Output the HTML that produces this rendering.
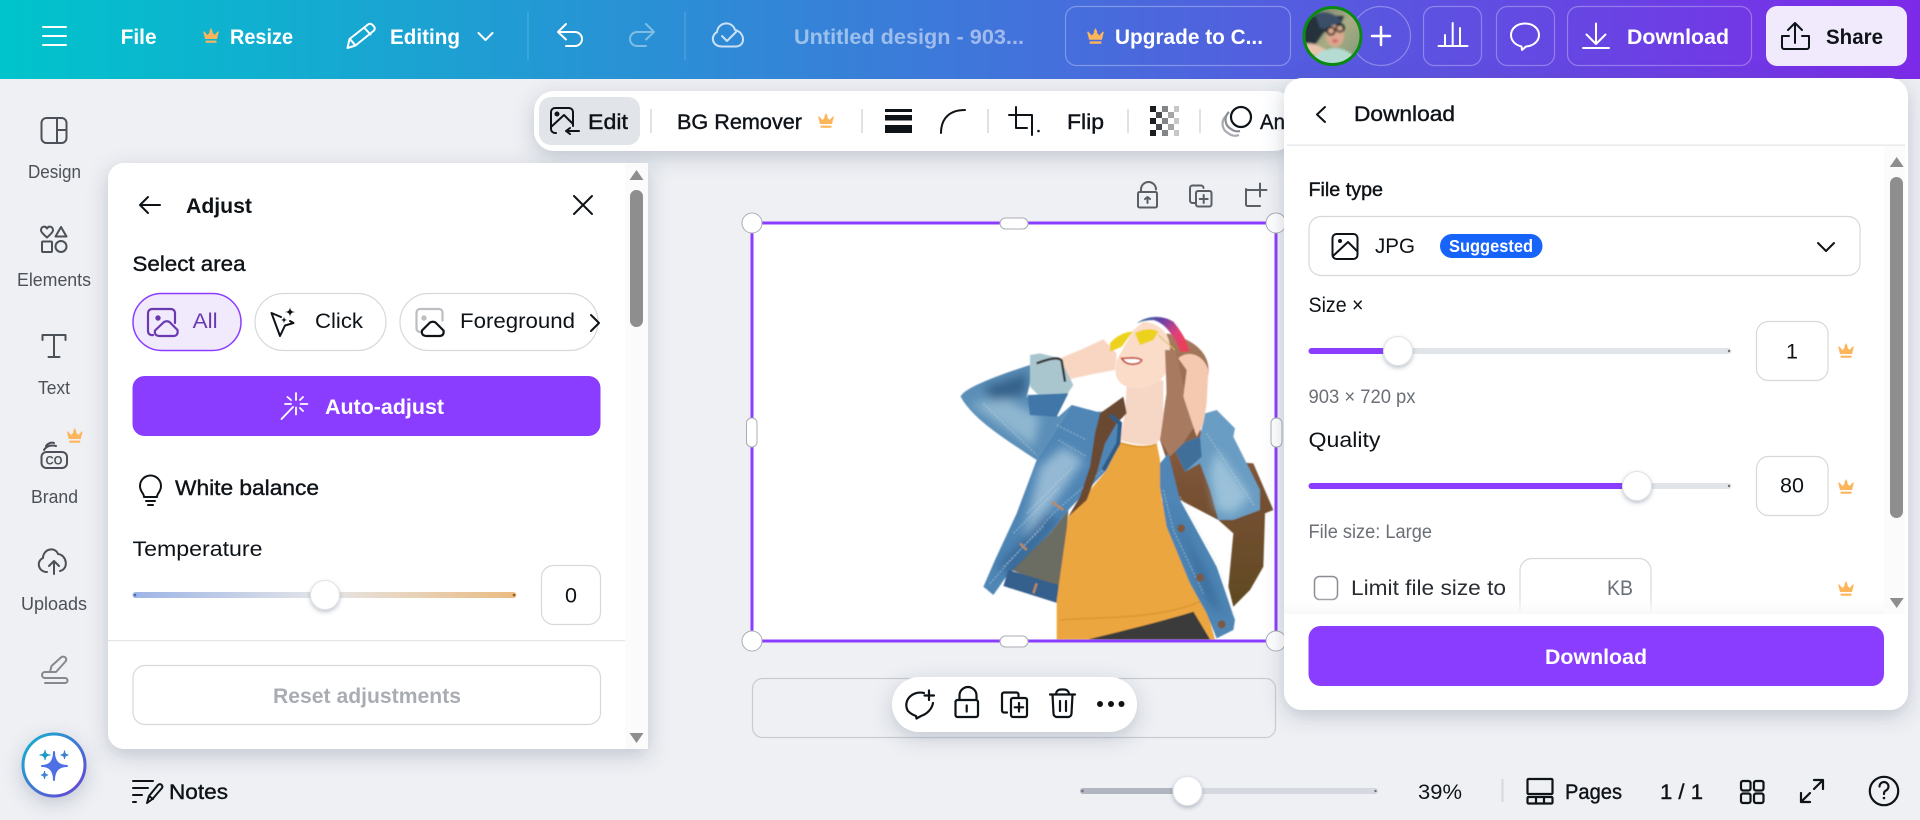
<!DOCTYPE html>
<html lang="en">
<head>
<meta charset="utf-8">
<title>Canva editor</title>
<style>
html,body{margin:0;padding:0;width:1920px;height:820px;overflow:hidden;background:#eff0f4}
svg{display:block;position:absolute;left:0;top:0}
text{font-family:"Liberation Sans",sans-serif;font-size:21.5px;fill:#0e1318}
.b{font-weight:bold}
.m{stroke:#0e1318;stroke-width:.4px}
.w{fill:#fff;font-weight:bold}
.s{font-size:18px;fill:#4c5058}
.g{fill:#6b6f76}
.i{fill:none;stroke:#0e1318;stroke-width:2;stroke-linecap:round;stroke-linejoin:round}
.iw{fill:none;stroke:#fff;stroke-width:2;stroke-linecap:round;stroke-linejoin:round}
.is{fill:none;stroke:#4c5058;stroke-width:2;stroke-linecap:round;stroke-linejoin:round}
.box{fill:#fff;stroke:#d6d8dd;stroke-width:1.2}
.hb{fill:none;stroke:rgba(255,255,255,.3);stroke-width:1.2}
.hnd{fill:#fff;stroke:#a9adb5;stroke-width:1}
</style>
</head>
<body>
<svg width="1920" height="820" viewBox="0 0 1920 820" xmlns="http://www.w3.org/2000/svg">
<defs>
<linearGradient id="hdr" x1="0" x2="1" y1="0" y2="0"><stop offset="0" stop-color="#00c4cc"/><stop offset="1" stop-color="#7d2ae8"/></linearGradient>
<linearGradient id="temp" x1="0" x2="1" y1="0" y2="0"><stop offset="0" stop-color="#9db4e6"/><stop offset=".5" stop-color="#e6e6e8"/><stop offset="1" stop-color="#eabb80"/></linearGradient>
<linearGradient id="ring" x1="0" x2="1" y1="0" y2="1"><stop offset="0" stop-color="#12b5cb"/><stop offset="1" stop-color="#6a3fd8"/></linearGradient>
<linearGradient id="band" x1="0" x2="1" y1="0" y2=".6"><stop offset="0" stop-color="#2f7f9c"/><stop offset=".4" stop-color="#6a3fa8"/><stop offset=".75" stop-color="#e0407a"/><stop offset="1" stop-color="#e8405a"/></linearGradient>
<linearGradient id="hair" x1="0" x2="0" y1="0" y2="1"><stop offset="0" stop-color="#a87b5f"/><stop offset=".55" stop-color="#7a5236"/><stop offset="1" stop-color="#5f4a22"/></linearGradient>
<linearGradient id="fade" x1="0" x2="0" y1="0" y2="1"><stop offset="0" stop-color="#fff" stop-opacity="0"/><stop offset="1" stop-color="#f8f8f9"/></linearGradient>
<linearGradient id="av" x1="0" x2="1" y1="0" y2="1"><stop offset="0" stop-color="#6a7a6a"/><stop offset=".5" stop-color="#a9ac84"/><stop offset="1" stop-color="#7d9a78"/></linearGradient>
<filter id="sh" x="-20%" y="-20%" width="140%" height="140%"><feDropShadow dx="0" dy="6" stdDeviation="10" flood-color="#40576d" flood-opacity=".28"/></filter>
<filter id="shb" x="-20%" y="-80%" width="140%" height="300%"><feDropShadow dx="0" dy="6" stdDeviation="10" flood-color="#40576d" flood-opacity=".26"/></filter>
<filter id="shc" x="-80%" y="-80%" width="260%" height="280%"><feDropShadow dx="0" dy="6" stdDeviation="9" flood-color="#40576d" flood-opacity=".25"/></filter>
<filter id="sh2" x="-60%" y="-60%" width="220%" height="240%"><feDropShadow dx="0" dy="2" stdDeviation="2" flood-color="#40576d" flood-opacity=".35"/></filter>
<filter id="soft" x="-5%" y="-5%" width="110%" height="110%"><feGaussianBlur stdDeviation="1.6"/></filter>
<filter id="soft2" x="-10%" y="-10%" width="120%" height="120%"><feGaussianBlur stdDeviation="1"/></filter>
<filter id="patch" x="-30%" y="-30%" width="160%" height="160%"><feGaussianBlur stdDeviation="14"/></filter>
<symbol id="crown" viewBox="0 0 16 15"><path fill="#fdb55c" d="M8 0l1.5 3 0 1.6L11.5 7 15 3.2l.8.6L14 11H2L.2 3.8l.8-.6L4.5 7l2-2.4V3Z"/><rect x="2.5" y="12.6" width="11" height="2.2" rx=".6" fill="#fdb55c"/></symbol>
<clipPath id="cvs"><rect x="753" y="224" width="522" height="416"/></clipPath>
<clipPath id="avc"><circle cx="1332.5" cy="36" r="28"/></clipPath>
<clipPath id="dlc"><rect x="1284" y="146" width="624" height="468"/></clipPath>
<clipPath id="jkt"><path d="M62 290C70 270 130 240 270 195L275 230 260 290 355 350 395 315 470 335 520 335 545 370 540 430 500 510 385 630 330 700 195 835 160 885 130 860 165 780 230 640 290 480C200 420 100 360 62 290ZM660 490L700 440 780 410 795 340 830 330 885 385 880 410 960 570 960 630 880 660 835 660 885 960 880 990 830 1015 800 940 750 850 680 680 660 560Z"/></clipPath>
</defs>

<rect width="1920" height="820" fill="#eff0f4"/>

<!-- Canvas -->
<rect x="752" y="223" width="524" height="418" fill="#fff"/>
<g clip-path="url(#cvs)">
<g transform="translate(940 300) scale(.33333)" filter="url(#soft)">
<path fill="url(#hair)" d="M680 100C760 115 812 160 805 220L770 330 800 480 940 490 1000 630 975 640 970 800 930 870 880 920 865 860 880 700 835 660 720 600 660 420 680 280Z"/>
<path fill="#5b8fb8" d="M62 290C70 270 130 240 270 195L275 230 260 290 355 350 395 315 290 480C200 420 100 360 62 290Z"/>
<path fill="#4f86b5" d="M395 315L470 335 520 335 545 370 540 430 500 510 385 630 330 700 195 835 160 885 130 860 165 780 230 640 290 480Z"/>
<path fill="#6c6d62" d="M385 630L380 700 355 870 215 810 330 700Z"/>
<path fill="#355f8d" d="M205 810L355 855 355 910 190 858Z"/>
<path fill="#eba63f" d="M540 425C590 440 620 440 650 430L660 480 665 600 760 800 800 930 825 1018 350 1018 350 900 385 650 500 510Z"/>
<path fill="none" stroke="#d48f2e" stroke-width="4" opacity=".7" d="M360 960C480 950 650 960 780 905M545 430C590 445 620 445 650 432"/>
<path fill="#3a3b3a" d="M445 1018C560 990 680 960 760 935L810 1018Z"/>
<path fill="#4f86b5" d="M660 490L685 460 720 600 830 800 885 960 880 990 830 1015 800 940 750 850 680 680 660 560Z"/>
<path fill="#6a9dc3" d="M700 440L780 410 795 340 830 330 885 385 880 410 960 570 960 630 880 660 835 660 810 570 780 490 735 515Z"/>
<g clip-path="url(#jkt)">
<g filter="url(#patch)">
<path fill="#35628a" d="M130 262L262 218 255 285 160 300Z"/>
<path fill="#9cc0d6" opacity=".8" d="M90 310L200 300 300 350 280 440Z"/>
<path fill="#a6c6dc" opacity=".8" d="M300 500L370 440 430 480 340 610 250 710Z"/>
<path fill="#a8cade" opacity=".8" d="M830 450L930 590 880 640 830 630 810 520Z"/>
<path fill="#2f5f90" opacity=".7" d="M170 800L320 640 360 660 220 830Z"/>
<path fill="#2f5f90" opacity=".7" d="M690 620L800 820 850 950 800 900Z"/>
</g>
<path fill="none" stroke="#cfe0ea" stroke-width="3" opacity=".55" stroke-dasharray="6 5" d="M350 375L440 420M355 420L440 470M670 570L700 690 790 880M720 590L840 800 880 950M150 850L340 640 500 500M130 310L290 465M800 400L945 620M220 700L360 560M260 640L400 500M190 800L310 680"/>
</g>
<path fill="#3f6f99" d="M700 440L780 410 785 470 735 515Z"/>
<path fill="#f6d6c4" d="M560 260L670 240 670 400 650 430C610 440 570 430 540 420L555 340Z"/>
<path fill="#fbdcc9" d="M530 180C520 230 530 260 590 265 650 265 690 230 690 160 695 100 660 70 610 65L580 90Z"/>
<path fill="#a87a5e" d="M675 150L705 150 740 290 770 370 730 430 690 470 660 420 680 280Z"/>
<path fill="#f4c9b0" d="M715 175C740 150 790 160 805 210L800 310 790 370 770 410 760 380 730 290 740 210Z"/>
<path fill="#f8d6c2" d="M285 195L360 175 420 150 490 118 530 160 525 210 470 220 400 235 375 245Z"/>
<path fill="#a9c6cf" d="M270 165L300 160 360 175 400 255 380 285 300 290 270 260Z"/>
<path fill="#3f76a8" d="M262 285L385 280 350 350 270 345Z"/>
<path fill="none" stroke="#333" stroke-width="7" d="M290 190C330 175 355 170 365 182L375 245"/>
<path fill="#6b4a33" d="M550 290L560 340 530 370 495 430 470 520 440 600 385 650 420 590 450 500 465 400 480 340Z"/>
<path fill="none" stroke="#2d5b86" stroke-width="12" d="M510 345L540 370 535 430 490 510"/>
<path fill="none" stroke="#c08a5c" stroke-width="7" d="M335 605L370 630M240 730L260 750M290 850L280 880"/>
<circle cx="723" cy="685" r="12" fill="#7a5a44"/><circle cx="780" cy="833" r="12" fill="#7a5a44"/><circle cx="845" cy="973" r="12" fill="#7a5a44"/>
<path fill="#ecd21c" d="M510 130C530 105 560 95 578 95L545 140 510 155Z"/>
<path fill="#ecd21c" d="M585 100C610 85 640 85 655 95L640 120 600 135Z"/>
<path fill="none" stroke="#d9c25a" stroke-width="3" d="M655 105L705 150"/>
<path fill="#fff" stroke="#c14a3d" stroke-width="5" d="M545 175C565 175 590 170 605 180 600 195 560 200 545 175Z"/>
<path fill="url(#band)" d="M590 70C620 45 670 45 700 65 725 95 745 130 748 155L722 155C705 115 680 70 640 60 620 60 600 65 590 70Z"/>
</g>
</g>

<!-- Selection -->
<rect x="752" y="223" width="524" height="418" fill="none" stroke="#8b3dff" stroke-width="3"/>
<rect x="1000" y="218" width="28" height="11" rx="5.5" class="hnd"/>
<rect x="1000" y="636" width="28" height="11" rx="5.5" class="hnd"/>
<rect x="746.5" y="418" width="10.5" height="29" rx="5" class="hnd"/>
<rect x="1271" y="418" width="11" height="29" rx="5" class="hnd"/>
<circle cx="752" cy="223" r="10" class="hnd"/><circle cx="1276" cy="223" r="10" class="hnd"/>
<circle cx="752" cy="641" r="10" class="hnd"/><circle cx="1276" cy="641" r="10" class="hnd"/>

<!-- Canvas top icons -->
<g class="is" style="stroke:#5a5e65">
<path d="M1141 192v-2.500a7.500 7.500 0 0 1 15 0"/><rect x="1138" y="192" width="19" height="15.500" rx="1.500"/><path d="M1147.500 198v5M1145 199l2.500-2 2.500 2"/>
<path d="M1195 203h-2.500a2.500 2.500 0 0 1-2.500-2.500V188a2.500 2.500 0 0 1 2.500-2.500h8.500a2.500 2.500 0 0 1 2.500 2.500"/><rect x="1196" y="191" width="15.500" height="15.500" rx="2"/><path d="M1203.700 195v8M1199.700 199h8"/>
<path d="M1246 189v15.500a1.500 1.500 0 0 0 1.500 1.500h12.500M1253 190h-7M1260 183.500v13M1253.500 190h13"/>
</g>

<!-- Add page -->
<rect x="752.500" y="678.500" width="523" height="59" rx="10" fill="none" stroke="#c9ccd3" stroke-width="1.200"/>

<!-- Floating bar -->
<rect x="892" y="677" width="245" height="55" rx="27.500" fill="#fff" filter="url(#shb)"/>
<g class="i" style="stroke-width:2.200">
<path d="M924 693A14 12.500 0 0 0 908 711C911 714 913 715 916 716L916.500 718.500 921 716C927 714 932 709 933 703"/>
<path d="M929 690.500v9.500M924.500 695.500h9.500"/>
<path d="M959.500 700v-4.500a8.500 8.500 0 0 1 17 0v3"/><rect x="955.500" y="700" width="22.500" height="17" rx="2"/><path d="M966.700 705.500v6"/>
<path d="M1007 712.500h-3a2 2 0 0 1-2-2V694.500a2 2 0 0 1 2-2h12.500a2 2 0 0 1 2 2v3"/><rect x="1011" y="698" width="16" height="19" rx="2"/><path d="M1019 703v8.500M1014.700 707.300h8.500"/>
<path d="M1050 694.500h25M1056 694.500c0-3 2-5 5-5h3c3 0 5 2 5 5M1052.500 694.500l1 19a3.500 3.500 0 0 0 3.500 3.500h11a3.500 3.500 0 0 0 3.500-3.500l1-19M1060 701v10M1066 701v10"/>
</g>
<circle cx="1100" cy="704" r="3" fill="#0e1318"/><circle cx="1111" cy="704" r="3" fill="#0e1318"/><circle cx="1121.500" cy="704" r="3" fill="#0e1318"/>

<!-- Toolbar -->
<rect x="534" y="91" width="760" height="60" rx="20" fill="#fff" filter="url(#shb)"/>
<rect x="539" y="97" width="101" height="48" rx="12" fill="#e1e4e8"/>
<g class="i">
<path d="M556 133h-1a4 4 0 0 1-4-4v-17a4 4 0 0 1 4-4h14a4 4 0 0 1 4 4v14"/><path d="M551 127l13-12 9 9"/><circle cx="557" cy="114" r="1.500" fill="#0e1318"/><path d="M579 131h-13M570 128l-4 3 4 3"/>
</g>
<text x="588" y="129" textLength="40" lengthAdjust="spacingAndGlyphs" class="m">Edit</text>
<rect x="650" y="109" width="2" height="24" fill="#dfe1e5"/>
<text x="677" y="129" textLength="125" lengthAdjust="spacingAndGlyphs" class="m">BG Remover</text>
<use href="#crown" x="818" y="113" width="16" height="15"/>
<rect x="861" y="109" width="2" height="24" fill="#dfe1e5"/>
<rect x="885" y="109" width="27" height="3" fill="#0e1318"/><rect x="885" y="115" width="27" height="5.500" fill="#0e1318"/><rect x="885" y="125" width="27" height="8" fill="#0e1318"/>
<path class="i" d="M941 133C941 118 950 110 965 110"/>
<rect x="987" y="109" width="2" height="24" fill="#dfe1e5"/>
<path class="i" d="M1016 107V128H1027M1009 115H1032V135"/><circle cx="1038.500" cy="131" r="1.300" fill="#0e1318"/>
<text x="1067" y="129" textLength="37" lengthAdjust="spacingAndGlyphs" class="m">Flip</text>
<rect x="1127" y="109" width="2" height="24" fill="#dfe1e5"/>
<g fill="#0e1318" style="opacity:.95">
<rect x="1150" y="106" width="6" height="6"/><rect x="1162" y="106" width="6" height="6" opacity=".55"/><rect x="1174" y="106" width="5" height="6" opacity=".25"/>
<rect x="1156" y="112" width="6" height="6" opacity=".8"/><rect x="1168" y="112" width="6" height="6" opacity=".4"/>
<rect x="1150" y="118" width="6" height="6"/><rect x="1162" y="118" width="6" height="6" opacity=".55"/><rect x="1174" y="118" width="5" height="6" opacity=".25"/>
<rect x="1156" y="124" width="6" height="6" opacity=".8"/><rect x="1168" y="124" width="6" height="6" opacity=".4"/>
<rect x="1150" y="130" width="6" height="6"/><rect x="1162" y="130" width="6" height="6" opacity=".55"/><rect x="1174" y="130" width="5" height="6" opacity=".25"/>
</g>
<rect x="1199" y="109" width="2" height="24" fill="#dfe1e5"/>
<g fill="none" stroke-width="2.200"><path stroke="#a8abb0" d="M1226 116a10.500 10.500 0 0 0 2 17 10.500 10.500 0 0 0 11 2"/><path stroke="#8c9096" d="M1229 112a10.500 10.500 0 0 0 2 17 10.500 10.500 0 0 0 9 2"/><circle cx="1241" cy="117" r="10" stroke="#0e1318"/></g>
<text x="1260" y="129" textLength="25" lengthAdjust="spacingAndGlyphs" class="m">An</text>

<!-- Header -->
<rect width="1920" height="79" fill="url(#hdr)"/>
<path class="iw" d="M43 27h23M43 36h23M43 45h23"/>
<text x="120.600" y="44" textLength="36" lengthAdjust="spacingAndGlyphs" class="w">File</text>
<use href="#crown" x="203" y="28" width="16" height="15"/>
<text x="230" y="44" textLength="63" lengthAdjust="spacingAndGlyphs" class="w">Resize</text>
<path class="iw" d="M347.500 48l2-9L368 24.500q2-1.500 4 0l2 2q1.500 2 0 4L355.500 45.500ZM364.500 28l6 6.500M350 39l5 6"/>
<text x="390" y="44" textLength="70" lengthAdjust="spacingAndGlyphs" class="w">Editing</text>
<path class="iw" d="M478.500 33l7 7 7-7"/>
<rect x="527.500" y="12" width="1" height="48" fill="rgba(255,255,255,.22)"/>
<path class="iw" d="M566 24l-8 8 8 7.500M558 32h17a7 7 0 0 1 7 7 7 7 0 0 1-7 7h-9"/>
<path class="iw" opacity=".4" d="M646 24l8 8-8 7.500M654 32h-17a7 7 0 0 0-7 7 7 7 0 0 0 7 7h9"/>
<rect x="684.500" y="12" width="1" height="48" fill="rgba(255,255,255,.22)"/>
<path class="iw" opacity=".75" d="M722 46.500C712 46.500 710 36 717 32 718 22 732 20 735 30 745 32 746 46 736 46.500ZM722 36l5 5 9-9"/>
<text x="794" y="44" textLength="230" lengthAdjust="spacingAndGlyphs" class="w" style="fill:rgba(255,255,255,.5)">Untitled design - 903...</text>

<rect x="1065.500" y="6.500" width="225" height="59" rx="11" class="hb"/>
<use href="#crown" x="1087" y="28" width="17" height="16"/>
<text x="1115" y="44" textLength="148" lengthAdjust="spacingAndGlyphs" class="w">Upgrade to C...</text>

<circle cx="1381" cy="36" r="29.500" class="hb"/>
<path class="iw" style="stroke-width:2.500" d="M1381 27v18M1372 36h18"/>
<circle cx="1332.500" cy="36" r="28.500" fill="url(#av)"/>
<g clip-path="url(#avc)"><g filter="url(#soft2)">
<path d="M1304 16h40l-6 14-14 2-10 14-10-4z" fill="#28303a"/>
<path d="M1315 14c10-4 22 0 27 8l-8 8-14-2z" fill="#3a4f68"/>
<ellipse cx="1335" cy="36" rx="9" ry="11" fill="#dba98f"/>
<path d="M1306 44c6-2 14 2 20 6l-4 6-18-2z" fill="#e8c4ac"/>
<path d="M1312 66c0-12 10-16 22-18 10 0 22 6 26 18z" fill="#b5dcd2"/>
<circle cx="1331" cy="31" r="3.800" fill="none" stroke="#111" stroke-width="1.800"/><circle cx="1340" cy="28" r="3.800" fill="none" stroke="#111" stroke-width="1.800"/>
<ellipse cx="1335" cy="41" rx="3" ry="2" fill="#d06a70"/>
</g></g>
<circle cx="1332.500" cy="36" r="28.500" fill="none" stroke="#0a8a12" stroke-width="3"/>

<rect x="1423.500" y="6.500" width="58" height="59" rx="11" class="hb"/>
<path class="iw" d="M1438.500 46h29M1445 46V35M1452.700 46V23M1460 46V28"/>
<rect x="1496.500" y="6.500" width="58" height="59" rx="11" class="hb"/>
<path class="iw" d="M1522 50l-.5-3.500C1515 45 1511 40.500 1511 35c0-6.500 6-11.500 14-11.500s14 5 14 11.500-6 11-13 11.500z"/>
<rect x="1567.500" y="6.500" width="184" height="59" rx="11" class="hb"/>
<path class="iw" d="M1596 23.500v20.500M1586.500 34.500l9.500 9.500 9.500-9.500M1583 48h26"/>
<text x="1627" y="44" textLength="102" lengthAdjust="spacingAndGlyphs" class="w">Download</text>
<rect x="1766" y="6" width="141" height="60" rx="11" fill="#f1eafc"/>
<path class="i" d="M1795 23v20M1788 30l7-7 7 7M1789 36h-7v11a2 2 0 0 0 2 2h23a2 2 0 0 0 2-2V36h-7"/>
<text x="1826" y="44" textLength="57" lengthAdjust="spacingAndGlyphs" class="b">Share</text>

<!-- Sidebar -->
<g class="is">
<rect x="41.500" y="118" width="25" height="25" rx="5"/><path d="M57 118v25M57 130h9.500"/>
<path d="M47 237.500C43 234 41 232 41 230.500 41 226 45.500 225.500 47 228.500 48.500 225.500 53 226 53 230.500 53 232 51 234 47 237.500Z"/><path d="M61 227l5.500 9.500h-11z"/><rect x="42" y="241.500" width="10" height="10.500" rx="1"/><circle cx="61" cy="246.500" r="5.500"/>
<path d="M42.500 340v-5h23v5M54 335v22M48.500 357h11"/>
<rect x="41.500" y="452" width="25.500" height="16" rx="5"/><path d="M44 450c3-5 9-5 12-4M46 446c2-3 6-4 8-3"/>
<path d="M47 572c-9 0-11-11-4-14 0-9 12-12 15-4 9 1 11 15 2 17"/><path d="M54 574v-12M49 566l5-5 5 5"/>
</g>
<text x="45.500" y="464.500" textLength="17" lengthAdjust="spacingAndGlyphs" style="font-size:12px;fill:#4c5058;font-weight:bold">CO</text>
<use href="#crown" x="66.500" y="428" width="16.500" height="15"/>
<text x="28" y="178" textLength="53" lengthAdjust="spacingAndGlyphs" class="s">Design</text>
<text x="17" y="286" textLength="74" lengthAdjust="spacingAndGlyphs" class="s">Elements</text>
<text x="38" y="394" textLength="32" lengthAdjust="spacingAndGlyphs" class="s">Text</text>
<text x="31" y="503" textLength="47" lengthAdjust="spacingAndGlyphs" class="s">Brand</text>
<text x="21" y="610" textLength="66" lengthAdjust="spacingAndGlyphs" class="s">Uploads</text>
<g fill="none" stroke="#85888e" stroke-width="2" stroke-linecap="round" stroke-linejoin="round">
<path d="M50 672l1.500-6 10-9q2-1 4 .5 1.500 2 0 4l-9.500 10.500z"/><path d="M50 672h-5a3 3 0 0 0 0 6h20a2.500 2.500 0 0 1 0 5H45"/>
</g>
<circle cx="54" cy="765" r="31" fill="#fff" stroke="url(#ring)" stroke-width="3" filter="url(#shc)"/>
<path fill="#4f6fe4" d="M54 752Q54 766 67 766 54 766 54 780 54 766 42 766 54 766 54 752Z" stroke="#4f6fe4" stroke-width="2" stroke-linejoin="round"/>
<path fill="#1d9bc4" d="M45 750Q45 755 50.500 755 45 755 45 760 45 755 39.500 755 45 755 45 750Z" stroke="#1d9bc4"/>
<path fill="#3b7fd0" d="M64.500 750.500Q64.500 755 68.500 755 64.500 755 64.500 759 64.500 755 60.500 755 64.500 755 64.500 750.500Z" stroke="#3b7fd0"/>
<path fill="#3f82d4" d="M44.500 771Q44.500 775 48 775 44.500 775 44.500 779 44.500 775 41 775 44.500 775 44.500 771Z" stroke="#3f82d4"/>

<!-- Adjust panel -->
<path d="M124 163H648V749H124a16 16 0 0 1-16-16V179a16 16 0 0 1 16-16Z" fill="#fff" filter="url(#sh)"/>
<rect x="625" y="163" width="23" height="586" fill="#fbfbfc"/>
<path fill="#8e8e8e" d="M636.500 170l7 10h-14z"/>
<rect x="630" y="190" width="13" height="137" rx="6.500" fill="#8e8e8e"/>
<path fill="#8e8e8e" d="M636.500 743l7-10h-14z"/>
<path class="i" d="M160 205h-20M148 197l-8 8 8 8"/>
<text x="186" y="213" textLength="66" lengthAdjust="spacingAndGlyphs" class="b">Adjust</text>
<path class="i" d="M574 196l18 18M592 196l-18 18"/>
<text x="132.500" y="271" textLength="113" lengthAdjust="spacingAndGlyphs" class="m">Select area</text>

<rect x="133" y="293.500" width="108" height="57" rx="28.500" fill="#f1eafd" stroke="#8b3dff" stroke-width="1.500"/>
<g fill="none" stroke="#6a39b0" stroke-width="2.200" stroke-linecap="round" stroke-linejoin="round">
<path d="M153 335a4 4 0 0 1-5-4v-18a4 4 0 0 1 4-4h19a4 4 0 0 1 4 4v10"/><circle cx="158" cy="318" r="1.600" fill="#6a39b0"/><path d="M160 336q-6 0-5-5.500l9-8.500q3-1.500 5.500 0l8 8q1 6-4.500 6z"/>
</g>
<text x="192.700" y="328" textLength="25" lengthAdjust="spacingAndGlyphs" style="fill:#6a39b0">All</text>

<rect x="255" y="293.500" width="131" height="57" rx="28.500" class="box"/>
<path class="i" d="M281 317L271.500 313 280 336 285 325.500 293.500 323 290 321"/>
<path fill="#0e1318" d="M290 306.500q0 5.500 5.500 5.500-5.500 0-5.500 5.500 0-5.500-5.500-5.500 5.500 0 5.500-5.500z"/><path d="M284 317.500q0 2.500 2.500 2.500-2.500 0-2.500 2.500 0-2.500-2.500-2.500 2.500 0 2.500-2.500z" fill="#0e1318" stroke="#0e1318" stroke-width=".6"/>
<text x="315" y="328" textLength="48" lengthAdjust="spacingAndGlyphs">Click</text>

<rect x="400" y="293.500" width="198" height="57" rx="28.500" class="box"/>
<g fill="none" stroke-width="2.200" stroke-linecap="round" stroke-linejoin="round">
<path stroke="#bcbec2" d="M421 332h-1a3.500 3.500 0 0 1-3.500-3.500V312.500a3.500 3.500 0 0 1 3.500-3.500h19a3.500 3.500 0 0 1 3.500 3.500v8"/><circle cx="424" cy="318" r="1.600" fill="#bcbec2" stroke="#bcbec2"/>
<path stroke="#0e1318" d="M427 336q-6 0-5-5.500l8-8q3-1.500 5.500 0l8 8q1 5.500-4.500 5.500z"/>
</g>
<text x="460" y="328" textLength="115" lengthAdjust="spacingAndGlyphs">Foreground</text>
<path class="i" d="M591 315l8 8-8 8"/>

<rect x="132.500" y="376" width="468" height="60" rx="12" fill="#8b3dff"/>
<path class="iw" style="stroke-width:1.800" d="M281.500 419L293 407M296 393v7M307.500 404h-7M296 407.500v7M303 397l-3 3M303 411l-3-3M287.500 397l3.500 3M285 404h6"/>
<text x="325" y="414" textLength="119" lengthAdjust="spacingAndGlyphs" class="w">Auto-adjust</text>

<path class="i" d="M144 497c0-4-4-5-4-11a10.500 10.500 0 0 1 21 0c0 6-4 7-4 11zM146 501h9M148 505h5"/>
<text x="175" y="495" textLength="144" lengthAdjust="spacingAndGlyphs" class="m">White balance</text>
<text x="132.500" y="556" textLength="130" lengthAdjust="spacingAndGlyphs">Temperature</text>
<rect x="132.500" y="592" width="384" height="6" rx="3" fill="url(#temp)"/>
<circle cx="135" cy="595" r="1.300" fill="#4a6ab8"/><circle cx="514" cy="595" r="1.300" fill="#8a5a2a"/>
<circle cx="325" cy="595" r="14.500" fill="#fff" stroke="#e0e2e6" filter="url(#sh2)"/>
<rect x="541.500" y="565.500" width="59" height="59" rx="12" class="box"/>
<text x="571" y="602.500" text-anchor="middle">0</text>
<rect x="108" y="640" width="517" height="1.200" fill="#e2e4e8"/>
<rect x="133" y="665.500" width="467.500" height="59" rx="12" class="box"/>
<text x="273" y="703" textLength="188" lengthAdjust="spacingAndGlyphs" class="b" style="fill:#a9adb3">Reset adjustments</text>

<!-- Bottom bar -->
<g class="i">
<path d="M133 781h20M133 788h15M133 795h9M133 802h3"/>
<path d="M147 803l2-7 9-11q2-1.500 3.500-.2 1.500 1.500.5 3.200l-9.500 11zM149 796l4 3"/>
</g>
<text x="169" y="799" textLength="59" lengthAdjust="spacingAndGlyphs" class="m">Notes</text>

<rect x="1080" y="788" width="298" height="6" rx="3" fill="#d5d8df"/>
<rect x="1080" y="788" width="108" height="6" rx="3" fill="#b0b5bf"/>
<circle cx="1082.500" cy="791" r="1.200" fill="#6b6f76"/><circle cx="1375.500" cy="791" r="1.200" fill="#6b6f76"/>
<circle cx="1187.500" cy="791" r="14.500" fill="#fff" stroke="#e0e2e6" filter="url(#sh2)"/>
<text x="1418" y="799" textLength="44" lengthAdjust="spacingAndGlyphs">39%</text>
<rect x="1501.500" y="779" width="2" height="23" fill="#d5d8df"/>
<g class="i" style="stroke-width:2.200">
<rect x="1527.500" y="779" width="25" height="15" rx="1"/><rect x="1527.500" y="797" width="25" height="6.500" rx="1"/><path d="M1536 797v6.500M1544 797v6.500"/>
<rect x="1741" y="781" width="9.500" height="9.500" rx="2"/><rect x="1754" y="781" width="9.500" height="9.500" rx="2"/><rect x="1741" y="793.500" width="9.500" height="9.500" rx="2"/><rect x="1754" y="793.500" width="9.500" height="9.500" rx="2"/>
<path d="M1814 780h9v9M1823 780l-9 9M1810 802h-9v-9M1801 802l9-9"/>
<circle cx="1884" cy="791" r="14.200"/><path d="M1879.500 786.500a4.500 4.500 0 1 1 6.500 4c-1.500.8-2 1.500-2 3.500"/>
</g>
<circle cx="1884" cy="798" r="1.300" fill="#0e1318"/>
<text x="1565" y="799" textLength="57" lengthAdjust="spacingAndGlyphs" class="m">Pages</text>
<text x="1660" y="799" textLength="43" lengthAdjust="spacingAndGlyphs" class="m">1 / 1</text>

<!-- Download panel -->
<rect x="1284" y="78" width="624" height="632" rx="18" fill="#fff" filter="url(#sh)"/>
<path class="i" d="M1325 107l-8 7.500 8 7.500"/>
<text x="1354" y="121" textLength="101" lengthAdjust="spacingAndGlyphs" class="m">Download</text>
<rect x="1287" y="144.500" width="618" height="1.200" fill="#e2e4e8"/>
<rect x="1884" y="146" width="21" height="468" fill="#fbfbfc"/>
<path fill="#8e8e8e" d="M1896.700 157l7 10h-14z"/>
<rect x="1890" y="177" width="13" height="341" rx="6.500" fill="#8e8e8e"/>
<path fill="#8e8e8e" d="M1896.700 608l7-10h-14z"/>

<g clip-path="url(#dlc)">
<text x="1308.500" y="196" textLength="74.500" lengthAdjust="spacingAndGlyphs" style="font-size:19px" class="m">File type</text>
<rect x="1309" y="216.500" width="551" height="59" rx="12" class="box"/>
<g class="i"><rect x="1332.500" y="234" width="25" height="25" rx="4"/><path d="M1333 256l15-14 9 9"/></g>
<circle cx="1340" cy="241" r="2" fill="#0e1318"/>
<text x="1375" y="253" textLength="40" lengthAdjust="spacingAndGlyphs">JPG</text>
<rect x="1440" y="234" width="102.500" height="24" rx="12" fill="#1764fa"/>
<text x="1449" y="252" textLength="84" lengthAdjust="spacingAndGlyphs" style="font-size:17.500px" class="w">Suggested</text>
<path class="i" d="M1818 243l8 8 8-8"/>
<text x="1308.500" y="312" textLength="55" lengthAdjust="spacingAndGlyphs">Size ×</text>

<rect x="1308.500" y="348" width="423" height="6" rx="3" fill="#e1e4e8"/>
<rect x="1308.500" y="348" width="90" height="6" rx="3" fill="#8b3dff"/>
<circle cx="1729" cy="351" r="1.200" fill="#6b6f76"/>
<circle cx="1398" cy="351" r="14.500" fill="#fff" stroke="#e0e2e6" filter="url(#sh2)"/>
<rect x="1756.500" y="321.500" width="71.500" height="59" rx="12" class="box"/>
<text x="1792" y="358.500" text-anchor="middle">1</text>
<use href="#crown" x="1838" y="343" width="16" height="15"/>
<text x="1308.500" y="403" textLength="107" lengthAdjust="spacingAndGlyphs" class="g" style="font-size:19px">903 × 720 px</text>
<text x="1308.500" y="447" textLength="72" lengthAdjust="spacingAndGlyphs">Quality</text>

<rect x="1308.500" y="483" width="423" height="6" rx="3" fill="#e1e4e8"/>
<rect x="1308.500" y="483" width="328" height="6" rx="3" fill="#8b3dff"/>
<circle cx="1729" cy="486" r="1.200" fill="#6b6f76"/>
<circle cx="1637" cy="486" r="14.500" fill="#fff" stroke="#e0e2e6" filter="url(#sh2)"/>
<rect x="1756.500" y="456.500" width="71.500" height="59" rx="12" class="box"/>
<text x="1792" y="492.500" text-anchor="middle">80</text>
<use href="#crown" x="1838" y="479" width="16" height="15"/>
<text x="1308.500" y="538" textLength="123.500" lengthAdjust="spacingAndGlyphs" class="g" style="font-size:19px">File size: Large</text>

<rect x="1314.500" y="576.500" width="23" height="23" rx="5" fill="#fff" stroke="#8a8e94" stroke-width="1.500"/>
<text x="1351" y="595" textLength="155" lengthAdjust="spacingAndGlyphs" style="fill:#2a2e33">Limit file size to</text>
<rect x="1520" y="558.500" width="131" height="70" rx="12" class="box"/>
<text x="1607" y="595" textLength="26" lengthAdjust="spacingAndGlyphs" class="g">KB</text>
<use href="#crown" x="1838" y="581" width="16" height="15"/>
<rect x="1284" y="596" width="600" height="18" fill="url(#fade)"/>
</g>

<rect x="1308.500" y="626" width="575.500" height="60" rx="12" fill="#8b3dff"/>
<text x="1545" y="664" textLength="102" lengthAdjust="spacingAndGlyphs" class="w">Download</text>
</svg>
</body>
</html>
